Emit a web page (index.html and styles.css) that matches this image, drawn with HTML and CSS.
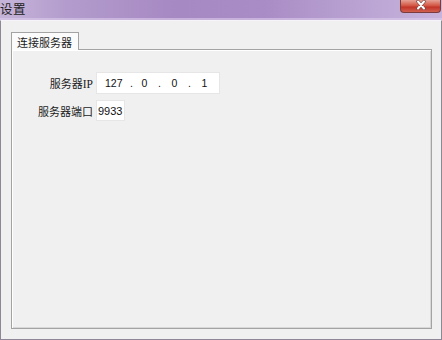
FILE: index.html
```html
<!DOCTYPE html>
<html>
<head>
<meta charset="utf-8">
<link rel="stylesheet" href="styles.css">
</head>
<body>
<div class="window">
  <div class="titlebar">
    <span class="title">设置</span>
    <div class="close">
      <svg width="16" height="10" viewBox="0 0 16 10">
        <path d="M5 1.5 L11 8.5 M11 1.5 L5 8.5" stroke="#7a4644" stroke-width="3.4" stroke-linecap="round"/>
        <path d="M5 1.5 L11 8.5 M11 1.5 L5 8.5" stroke="#ffffff" stroke-width="2" stroke-linecap="round"/>
      </svg>
    </div>
  </div>
  <div class="client">
    <div class="tabs">
      <div class="tab">连接服务器</div>
    </div>
    <div class="panel">
      <div class="form">
        <label class="lbl">服务器<span class="latin">IP</span></label>
        <div class="box ip">
          <span>127</span><span class="dot first">.</span><span class="oct">0</span><span class="dot">.</span><span class="oct">0</span><span class="dot">.</span><span class="oct">1</span>
        </div>
        <label class="lbl">服务器端口</label>
        <div class="box port">9933</div>
      </div>
    </div>
  </div>
</div>
</body>
</html>
```
FILE: styles.css
```css
* { box-sizing: border-box; }
html, body { margin: 0; padding: 0; }
body {
  width: 442px;
  height: 340px;
  overflow: hidden;
  font-family: "Noto Sans CJK SC", "Liberation Sans", sans-serif;
  font-size: 12px;
  color: #1b1b1b;
}
.window {
  width: 442px;
  height: 340px;
  display: flex;
  flex-direction: column;
  background: #f0f0f0;
}
.titlebar {
  height: 20px;
  flex: none;
  display: flex;
  justify-content: space-between;
  align-items: flex-start;
  background: linear-gradient(90deg, #c6b5d9 0%, #b39ccd 15%, #a688c2 40%, #a98cc5 60%, #b9a2d2 80%, #c7b3dc 100%);
  box-shadow: inset 0 -2px 0 rgba(220, 205, 235, 0.6);
}
.title {
  font-size: 12.5px;
  line-height: 16px;
  padding-top: 1px;
  color: #222;
  letter-spacing: 0.5px;
}
.close {
  width: 41px;
  height: 13px;
  margin-right: 1px;
  border: 1px solid #7b3a3c;
  border-top: none;
  border-radius: 0 0 4px 4px;
  background: linear-gradient(180deg, #e6a195 0%, #d45a48 45%, #c3352a 60%, #d0604f 100%);
  display: flex;
  align-items: center;
  justify-content: center;
}
.close svg { display: block; margin-top: -2px; }
.client {
  flex: 1;
  display: flex;
  flex-direction: column;
  padding: 11px 9px 10px 10px;
  border-left: 1px solid #8f8698;
  border-right: 1px solid #8f8698;
  border-bottom: 1px solid #8f8698;
  border-top: 1px solid #f6f4f8;
}
.tabs {
  display: flex;
  height: 17px;
  flex: none;
  position: relative;
  z-index: 1;
}
.tab {
  width: 68px;
  height: 18px;
  background: #fbfbfb;
  border: 1px solid #a3a3a3;
  border-bottom: none;
  padding-left: 5px;
  padding-top: 1px;
  font-size: 11px;
  line-height: 16px;
  color: #1b1b1b;
}
.panel {
  flex: 1;
  border: 1px solid #a3a3a3;
  box-shadow: inset 1px 1px 0 #ffffff, inset -1px -1px 0 #d8d8d8;
  background: #f0f0f0;
  padding: 22px 0 0 0;
}
.form {
  display: grid;
  grid-template-columns: 81px auto;
  column-gap: 3px;
  row-gap: 6px;
  justify-content: start;
  align-items: center;
}
.lbl {
  text-align: right;
  font-size: 11px;
  line-height: 14px;
  white-space: nowrap;
  color: #1b1b1b;
}
.latin { font-family: "Liberation Serif", serif; font-size: 11.5px; }
.box {
  background: #ffffff;
  border: 1px solid #e6e6e6;
  font-family: "Liberation Sans", sans-serif;
  font-size: 11px;
  color: #111;
  display: flex;
  align-items: center;
}
.ip {
  width: 124px;
  height: 22px;
  padding-left: 8px;
  font-size: 10.5px;
}
.ip span { display: inline-block; }
.ip .dot { width: 22px; text-align: center; }
.ip .dot.first { width: 18px; }
.ip .oct { width: 8px; text-align: center; }
.port {
  width: 29px;
  height: 21px;
  padding-left: 1px;
}
```
